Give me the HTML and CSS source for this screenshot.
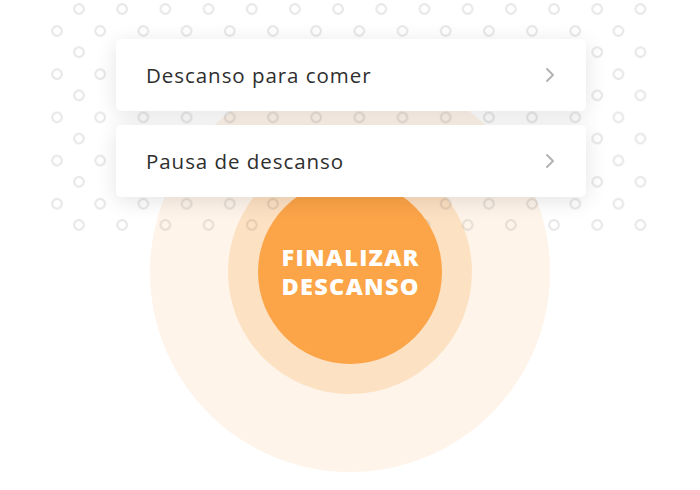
FILE: index.html
```html
<!DOCTYPE html>
<html lang="es">
<head>
<meta charset="utf-8">
<title>Finalizar descanso</title>
<link rel="stylesheet" href="styles.css">
</head>
<body>
<main class="stage">
  <div class="glow"><div class="glow-inner"></div></div>
  <div class="dots"></div>
  <button class="finish" type="button"><span class="finish-line">FINALIZAR</span><span class="finish-line">DESCANSO</span></button>
  <ul class="menu">
    <li class="card">
      <span class="card-label">Descanso para comer</span>
      <svg class="chev" width="10" height="16" viewBox="0 0 10 16"><path d="M2 2l6 6-6 6" fill="none" stroke="#b3b3b3" stroke-width="2" stroke-linecap="round" stroke-linejoin="round"/></svg>
    </li>
    <li class="card">
      <span class="card-label">Pausa de descanso</span>
      <svg class="chev" width="10" height="16" viewBox="0 0 10 16"><path d="M2 2l6 6-6 6" fill="none" stroke="#b3b3b3" stroke-width="2" stroke-linecap="round" stroke-linejoin="round"/></svg>
    </li>
  </ul>
</main>
</body>
</html>
```
FILE: styles.css
```css
* { box-sizing: border-box; }
html, body { margin: 0; padding: 0; background: #ffffff; }
.stage {
  display: grid;
  width: 700px;
  height: 490px;
  overflow: hidden;
}
.stage > * { grid-area: 1 / 1; align-self: start; justify-self: start; }

.glow {
  width: 400px;
  height: 400px;
  margin: 72px 0 0 150px;
  border-radius: 50%;
  background: #fef4ea;
  display: flex;
  align-items: center;
  justify-content: center;
}
.glow-inner {
  width: 244px;
  height: 244px;
  border-radius: 50%;
  background: #fde1c3;
}

.dots {
  width: 600px;
  height: 234px;
  margin-left: 50px;
  background-image:
    radial-gradient(circle at center, transparent 3.4px, rgba(0,0,0,0.095) 4px, rgba(0,0,0,0.095) 5.4px, transparent 6.1px),
    radial-gradient(circle at center, transparent 3.4px, rgba(0,0,0,0.095) 4px, rgba(0,0,0,0.095) 5.4px, transparent 6.1px);
  background-size: 43.2px 43.2px, 43.2px 43.2px;
  background-position: 7.4px -12.6px, -14.6px 9.4px;
}

.finish {
  width: 184px;
  height: 184px;
  margin: 180px 0 0 258px;
  border: 0;
  padding: 0;
  border-radius: 50%;
  background: #fca448;
  color: #ffffff;
  font-family: "Open Sans", "Noto Sans", sans-serif;
  font-weight: 800;
  font-size: 23.5px;
  line-height: 29px;
  text-align: center;
  cursor: pointer;
  display: flex;
  flex-direction: column;
  align-items: center;
  justify-content: center;
}
.finish-line {
  display: block;
  letter-spacing: 1.3px;
  margin-right: -1.3px;
}

.menu {
  list-style: none;
  margin: 39px 0 0 116px;
  padding: 0;
  width: 470px;
  display: flex;
  flex-direction: column;
  gap: 14px;
}
.card {
  height: 72px;
  background: #ffffff;
  border-radius: 5px;
  box-shadow: 0 4px 22px rgba(0,0,0,0.11);
  display: flex;
  align-items: center;
  justify-content: space-between;
  padding: 0 31px 0 30px;
}
.card-label {
  font-family: "Open Sans", "Noto Sans", sans-serif;
  font-size: 20.5px;
  letter-spacing: 0.95px;
  color: #2e2e2e;
}
.chev { display: block; }
```
